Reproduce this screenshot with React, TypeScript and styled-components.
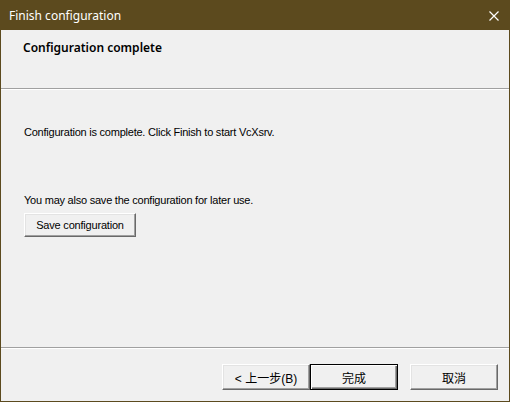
import React from 'react';
import styled, { createGlobalStyle } from 'styled-components';

const GlobalStyle = createGlobalStyle`
  html, body {
    margin: 0;
    padding: 0;
    background: #f0f0f0;
  }
  * {
    box-sizing: border-box;
  }
`;

const Window = styled.div`
  width: 510px;
  height: 402px;
  display: flex;
  flex-direction: column;
  border: 1px solid #5c4a1e;
  background: #f0f0f0;
  font-family: "Liberation Sans", Arial, sans-serif;
`;

const TitleBar = styled.div`
  height: 29px;
  flex: none;
  display: flex;
  align-items: center;
  justify-content: space-between;
  padding: 0 9px 0 8px;
  background: #5c4a1e;
  color: #ffffff;
  font-family: "Noto Sans", "Open Sans", sans-serif;
  font-size: 12px;
`;

const CloseButton = styled.div`
  width: 10px;
  height: 10px;
  margin-right: 1px;
  display: flex;
`;

const Header = styled.div`
  height: 58px;
  flex: none;
  padding: 9px 0 0 22px;
  font-family: "Noto Sans", "Open Sans", sans-serif;
  font-weight: 600;
  font-size: 12px;
  color: #000;
`;

const Separator = styled.div`
  flex: none;
  height: 2px;
  border-top: 1px solid #a0a0a0;
  border-bottom: 1px solid #ffffff;
`;

const Body = styled.div`
  flex: 1;
  display: flex;
  flex-direction: column;
  align-items: flex-start;
  padding: 36px 0 0 23px;
  font-size: 11px;
  letter-spacing: -0.23px;
  color: #000;
`;

const Line = styled.p<{ $gap?: number }>`
  margin: 0 0 ${(p) => p.$gap ?? 0}px 0;
  line-height: 13px;
`;

const Footer = styled.div`
  flex: none;
  height: 52px;
  display: flex;
  justify-content: flex-end;
  align-items: flex-start;
  padding: 15px 11px 0 0;
  gap: 12px;
`;

const ButtonPair = styled.div`
  display: flex;
`;

const Button = styled.button<{ $default?: boolean; $width?: number }>`
  width: ${(p) => p.$width ?? 88}px;
  height: 26px;
  padding: 0;
  background: #f0f0f0;
  color: #000;
  font-family: "Liberation Sans", "Noto Sans CJK TC", sans-serif;
  font-size: 12px;
  border: 1px solid;
  border-color: #ffffff #696969 #696969 #ffffff;
  box-shadow: inset -1px -1px 0 #a0a0a0, inset 1px 1px 0 #e3e3e3;
  ${(p) =>
    p.$default &&
    `
    border: 1px solid #000;
    box-shadow: inset 1px 1px 0 #fff, inset -1px -1px 0 #696969, inset -2px -2px 0 #a0a0a0;
  `}
`;

const SaveButton = styled(Button)`
  height: 24px;
  font-family: "Liberation Sans", Arial, sans-serif;
  font-size: 11px;
  letter-spacing: -0.2px;
`;

export default function App() {
  return (
    <>
      <GlobalStyle />
      <Window>
        <TitleBar>
          <span>Finish configuration</span>
          <CloseButton>
            <svg width="10" height="10" viewBox="0 0 10 10">
              <path d="M0.5 0.5L9.5 9.5M9.5 0.5L0.5 9.5" stroke="#fff" strokeWidth="1.2" />
            </svg>
          </CloseButton>
        </TitleBar>
        <Header>Configuration complete</Header>
        <Separator />
        <Body>
          <Line $gap={55}>Configuration is complete. Click Finish to start VcXsrv.</Line>
          <Line $gap={6}>You may also save the configuration for later use.</Line>
          <SaveButton $width={112}>Save configuration</SaveButton>
        </Body>
        <Separator />
        <Footer>
          <ButtonPair>
            <Button>&lt; 上一步(B)</Button>
            <Button $default>完成</Button>
          </ButtonPair>
          <Button>取消</Button>
        </Footer>
      </Window>
    </>
  );
}
